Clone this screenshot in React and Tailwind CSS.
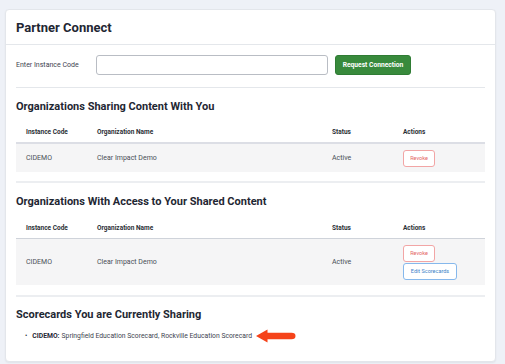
import React from "react";

function Table({ rows, thick }) {
  return (
    <div className="w-full">
      <div
        className={`grid grid-cols-[71px_235px_71px_94px] h-[20px] items-center text-[6.5px] font-bold text-[#2b2f36] ${
          thick ? "border-b-2 border-[#dcdee5]" : "border-b border-[#cfd3da]"
        }`}
      >
        <div className="pl-[10px]">Instance Code</div>
        <div className="pl-[10px]">Organization Name</div>
        <div className="pl-[10px]">Status</div>
        <div className="pl-[10px]">Actions</div>
      </div>
      {rows}
    </div>
  );
}

function RevokeBtn() {
  return (
    <div className="w-[32px] h-[17px] flex items-center justify-center border border-[#f2a5a5] rounded-[3px] bg-white text-[5.5px] text-[#e46565]">
      Revoke
    </div>
  );
}

function EditBtn() {
  return (
    <div className="w-[54px] h-[17px] flex items-center justify-center border border-[#86b8ec] rounded-[3px] bg-white text-[5.5px] text-[#3d83c8]">
      Edit Scorecards
    </div>
  );
}

export default function App() {
  return (
    <div
      className="w-[505px] h-[364px] bg-[#eef1f7] pt-[9px] pl-[5px] overflow-hidden"
      style={{ fontFamily: "Roboto, 'Liberation Sans', sans-serif" }}
    >
      <div className="w-[491px] h-[353px] bg-white rounded-[4px] border border-[#e3e6eb] shadow-[0_1px_2px_rgba(0,0,0,0.06)] flex flex-col">
        <div className="h-[35px] px-[10px] flex items-center border-b border-[#e4e7eb] shrink-0">
          <h1 className="text-[13px] font-bold text-[#1f2733] leading-none">Partner Connect</h1>
        </div>
        <div className="px-[10px] flex flex-col">
          <div className="mt-[10px] h-[20px] flex items-center">
            <div className="w-[80px] text-[7px] text-[#3e4450]">Enter Instance Code</div>
            <div className="w-[232px] h-[20px] border border-[#b9bdc4] rounded-[3px] bg-white" />
            <div className="ml-[7px] w-[76px] h-[20px] rounded-[3px] bg-[#388a3c] border border-[#2f7c34] flex items-center justify-center text-[6.7px] font-bold text-white">
              Request Connection
            </div>
          </div>
          <div className="mt-[12px] border-b border-[#e4e7eb]" />

          <div className="h-[36px] flex items-center">
            <h2 className="text-[11px] font-bold text-[#1f2733] leading-none">
              Organizations Sharing Content With You
            </h2>
          </div>
          <Table
            thick
            rows={
              <div className="grid grid-cols-[71px_235px_71px_94px] h-[28px] items-center bg-[#f5f5f6] text-[7px] text-[#4a4f57]">
                <div className="pl-[10px]">CIDEMO</div>
                <div className="pl-[10px]">Clear Impact Demo</div>
                <div className="pl-[10px]">Active</div>
                <div className="pl-[10px]">
                  <RevokeBtn />
                </div>
              </div>
            }
          />
          <div className="mt-[9px] border-b-2 border-[#eceef1]" />

          <div className="h-[36px] flex items-center">
            <h2 className="text-[11px] font-bold text-[#1f2733] leading-none">
              Organizations With Access to Your Shared Content
            </h2>
          </div>
          <Table
            rows={
              <div className="grid grid-cols-[71px_235px_71px_94px] h-[46px] items-center bg-[#f5f5f6] text-[7px] text-[#4a4f57]">
                <div className="pl-[10px]">CIDEMO</div>
                <div className="pl-[10px]">Clear Impact Demo</div>
                <div className="pl-[10px]">Active</div>
                <div className="pl-[10px] flex flex-col gap-[1px]">
                  <RevokeBtn />
                  <EditBtn />
                </div>
              </div>
            }
          />
          <div className="mt-[10px] border-b-2 border-[#eceef1]" />

          <div className="h-[34px] flex items-center">
            <h2 className="text-[11px] font-bold text-[#1f2733] leading-none">
              Scorecards You are Currently Sharing
            </h2>
          </div>
          <div className="h-[10px] flex items-center text-[6.8px] text-[#3e4450]">
            <span className="ml-[9px] mr-[5px] text-[#2b2f36]">•</span>
            <span className="font-bold text-[#1f2733]">CIDEMO:</span>
            <span className="ml-[2px]">Springfield Education Scorecard, Rockville Education Scorecard</span>
            <svg width="40" height="14" viewBox="0 0 40 14" className="ml-[4px]">
              <path
                d="M0 7 L11.5 0.5 L11.5 3.8 L35.5 3.8 Q39.5 3.8 39.5 7 Q39.5 10.2 35.5 10.2 L11.5 10.2 L11.5 13.5 Z"
                fill="#f5431a"
              />
            </svg>
          </div>
        </div>
      </div>
    </div>
  );
}
